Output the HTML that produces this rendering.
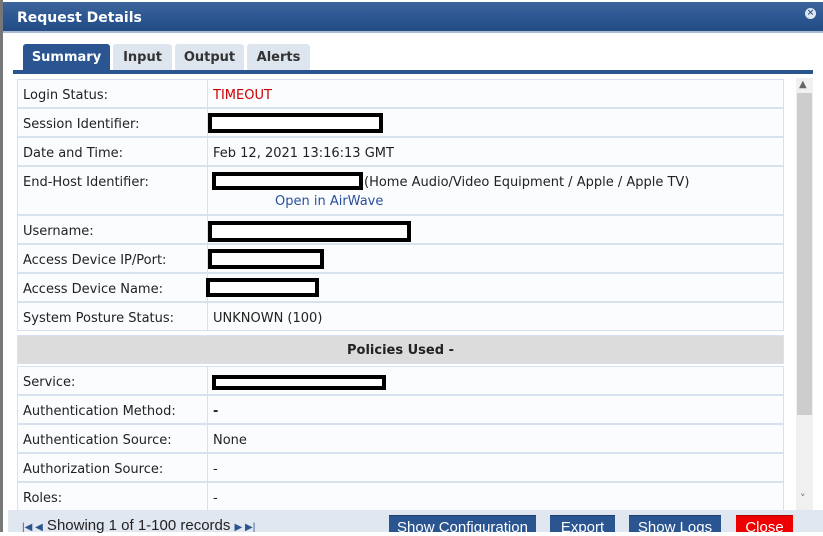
<!DOCTYPE html>
<html><head><meta charset="utf-8"><style>
*{margin:0;padding:0;box-sizing:border-box}
body{width:823px;height:532px;overflow:hidden;background:#fff;font-family:"DejaVu Sans","Liberation Sans",sans-serif;font-size:13px;color:#222;position:relative}
.abs{position:absolute}
.title{left:3px;top:2px;width:820px;height:31px;background:linear-gradient(#3d659c,#2a5590 60%,#244c85);color:#fff;font-weight:bold;font-size:14px;padding:8px 0 0 14px;border-bottom:2px solid #a9bad3}
.lb{left:0;top:0;width:3px;height:532px;background:#777}
.tab{top:44px;height:27px;background:#dde5ef;color:#333;font-weight:bold;font-size:13px;text-align:center;padding-top:6px;border-radius:3px 3px 0 0}
.tab.on{background:#2a5590;color:#fff}
.strip{left:13px;top:70px;width:800px;height:4px;background:#2a5590}
.row{left:17px;width:767px;border:1px solid #d8e2ee;background:#fafcfe}
.lab{position:absolute;left:0;top:0;width:190px;height:100%;border-right:1px solid #d8e2ee;padding:8px 0 0 5px}
.val{position:absolute;left:195px;top:8px}
.red{color:#c00}
.blk{position:absolute;border:4px solid #000;background:#fff}
.btn{top:515px;height:17px;background:#2a5590;color:#fff;font-family:"Liberation Sans Narrow","Liberation Sans",sans-serif;font-size:15px;text-align:center;padding-top:3px;border-top:1px solid #1d3e6e}
</style></head><body>
<div class="abs lb"></div>
<div class="abs title">Request Details</div>
<div class="abs" style="left:805px;top:8px;width:11px;height:11px;border-radius:50%;background:#dfe6ef;color:#2a5590;font-size:9px;line-height:11px;text-align:center;font-weight:bold">×</div>
<div class="abs tab on" style="left:23px;width:87px">Summary</div>
<div class="abs tab" style="left:113px;width:59px">Input</div>
<div class="abs tab" style="left:175px;width:69px">Output</div>
<div class="abs tab" style="left:247px;width:63px">Alerts</div>
<div class="abs strip"></div>

<div class="abs row" style="top:79px;height:29px"><div class="lab">Login Status:</div><div class="val red">TIMEOUT</div></div>
<div class="abs row" style="top:108px;height:29px"><div class="lab">Session Identifier:</div><div class="blk" style="left:190px;top:4px;width:175px;height:20px"></div></div>
<div class="abs row" style="top:137px;height:29px"><div class="lab">Date and Time:</div><div class="val">Feb 12, 2021 13:16:13 GMT</div></div>
<div class="abs row" style="top:166px;height:49px"><div class="lab">End-Host Identifier:</div><div class="blk" style="left:194px;top:5px;width:151px;height:18px"></div><div class="val" style="left:346px;top:8px">(Home Audio/Video Equipment / Apple / Apple TV)</div><div class="val" style="left:257px;top:27px;color:#2a4f9a">Open in AirWave</div></div>
<div class="abs row" style="top:215px;height:29px"><div class="lab">Username:</div><div class="blk" style="left:190px;top:5px;width:203px;height:21px"></div></div>
<div class="abs row" style="top:244px;height:29px"><div class="lab">Access Device IP/Port:</div><div class="blk" style="left:190px;top:4px;width:116px;height:20px"></div></div>
<div class="abs row" style="top:273px;height:29px"><div class="lab">Access Device Name:</div><div class="blk" style="left:188px;top:4px;width:113px;height:19px"></div></div>
<div class="abs row" style="top:302px;height:29px"><div class="lab">System Posture Status:</div><div class="val">UNKNOWN (100)</div></div>
<div class="abs" style="left:17px;top:335px;width:767px;height:29px;background:#dcdcdc;border:1px solid #d8e2ee;font-weight:bold;text-align:center;padding-top:7px">Policies Used -</div>
<div class="abs row" style="top:366px;height:29px"><div class="lab">Service:</div><div class="blk" style="left:194px;top:8px;width:174px;height:15px"></div></div>
<div class="abs row" style="top:395px;height:29px"><div class="lab">Authentication Method:</div><div class="val" style="font-weight:bold">-</div></div>
<div class="abs row" style="top:424px;height:29px"><div class="lab">Authentication Source:</div><div class="val">None</div></div>
<div class="abs row" style="top:453px;height:29px"><div class="lab">Authorization Source:</div><div class="val">-</div></div>
<div class="abs row" style="top:482px;height:29px"><div class="lab">Roles:</div><div class="val">-</div></div>

<div class="abs" style="left:796px;top:78px;width:17px;height:432px;background:#f0f0f0"></div>
<div class="abs" style="left:797px;top:93px;width:15px;height:322px;background:#cdcdcd"></div>
<div class="abs" style="left:799px;top:79px;font-size:10px;color:#666">&#9650;</div>
<div class="abs" style="left:800px;top:492px;font-size:11px;color:#666">&#709;</div>

<div class="abs" style="left:8px;top:510px;width:815px;height:22px;background:#e1e7f0"></div>
<div class="abs" style="left:22px;top:517px;font-family:'Liberation Sans Narrow','Liberation Sans',sans-serif;font-size:15px;color:#222"><span style="color:#2a5590;font-size:10px">|&#9664; &#9664;</span> Showing 1 of 1-100 records <span style="color:#2a5590;font-size:10px">&#9654; &#9654;|</span></div>
<div class="abs btn" style="left:389px;width:147px">Show Configuration</div>
<div class="abs btn" style="left:550px;width:65px">Export</div>
<div class="abs btn" style="left:629px;width:92px">Show Logs</div>
<div class="abs btn" style="left:736px;width:57px;background:#e00;border-top-color:#a00">Close</div>
</body></html>
